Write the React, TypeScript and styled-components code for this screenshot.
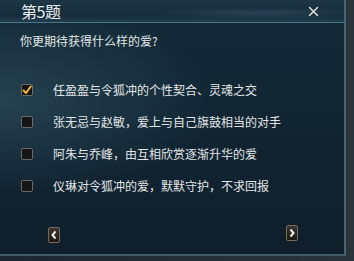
import React from "react"
import styled, { createGlobalStyle } from "styled-components"

const options = [
    { id: 1, text: "任盈盈与令狐冲的个性契合、灵魂之交", checked: true },
    { id: 2, text: "张无忌与赵敏，爱上与自己旗鼓相当的对手", checked: false },
    { id: 3, text: "阿朱与乔峰，由互相欣赏逐渐升华的爱", checked: false },
    { id: 4, text: "仪琳对令狐冲的爱，默默守护，不求回报", checked: false }
]

const GlobalStyle = createGlobalStyle`
    html, body {
        margin: 0;
        padding: 0;
        background: #141a20;
    }
    body {
        font-family: "Noto Sans CJK SC", "Liberation Sans", sans-serif;
    }
`

const Frame = styled.div`
    width: 354px;
    height: 261px;
    display: flex;
    background: linear-gradient(90deg, #1d2630 0%, #2a323a 100%);
`

const Panel = styled.div`
    width: 346px;
    height: 256px;
    display: flex;
    flex-direction: column;
    box-sizing: border-box;
    border-right: 2px solid #4a6370;
    border-bottom: 2px solid #3e5866;
    background:
        radial-gradient(ellipse at 0% 40%, rgba(60, 100, 115, 0.45) 0%, rgba(60, 100, 115, 0) 45%),
        linear-gradient(180deg, #142b38 0%, #112331 60%, #0f1f2c 100%);
`

const Header = styled.div`
    height: 23px;
    display: flex;
    align-items: center;
    justify-content: space-between;
    padding: 0 25px 0 21px;
    box-sizing: border-box;
    border-bottom: 1px solid #4d7486;
    background:
        radial-gradient(ellipse at 75% 60%, rgba(70, 110, 130, 0.35) 0%, rgba(70, 110, 130, 0) 30%),
        linear-gradient(180deg, #1d3746 0%, #162c3a 70%, #213e4e 100%);
`

const Title = styled.div`
    font-size: 16px;
    line-height: 22px;
    color: #e8ecee;
    letter-spacing: -0.4px;
`

const CloseButton = styled.div`
    width: 11px;
    height: 11px;
    display: flex;
    align-items: center;
    justify-content: center;
    margin-top: 1px;
`

const Body = styled.div`
    flex: 1;
    display: flex;
    flex-direction: column;
    padding: 10px 20px 0 21px;
`

const Question = styled.div`
    font-size: 12px;
    line-height: 16px;
    color: #e2e6e8;
    margin-left: -1px;
`

const OptionList = styled.div`
    display: flex;
    flex-direction: column;
    margin-top: 33px;
    gap: 16px;
`

const Option = styled.div`
    display: flex;
    align-items: center;
    height: 16px;
    gap: 20px;
`

const Box = styled.div`
    width: 10px;
    height: 10px;
    border: 1px solid #6b6a66;
    border-radius: 2px;
    background: #151515;
    display: flex;
    align-items: center;
    justify-content: center;
    flex-shrink: 0;
`

const OptionText = styled.div`
    font-size: 12px;
    line-height: 16px;
    color: #e2e6e8;
`

const Nav = styled.div`
    display: flex;
    justify-content: space-between;
    padding: 0 26px 0 27px;
    margin-top: 31px;
`

const ArrowButton = styled.div<{ $offset: number }>`
    width: 10px;
    height: 14px;
    margin-top: ${p => p.$offset}px;
    border: 1px solid #7a6a52;
    border-radius: 2px;
    background: linear-gradient(180deg, #3a3631 0%, #1b1815 100%);
    display: flex;
    align-items: center;
    justify-content: center;
`

export default function App() {
    return (
        <Frame>
            <GlobalStyle />
            <Panel>
                <Header>
                    <Title>第5题</Title>
                    <CloseButton>
                        <svg width="11" height="11" viewBox="0 0 11 11">
                            <path d="M1.5 1.5 L9.5 9.5 M9.5 1.5 L1.5 9.5" stroke="#e6e0d2" strokeWidth="1.5" strokeLinecap="round" />
                        </svg>
                    </CloseButton>
                </Header>
                <Body>
                    <Question>你更期待获得什么样的爱?</Question>
                    <OptionList>
                        {options.map(o => (
                            <Option key={o.id}>
                                <Box>
                                    {o.checked && (
                                        <svg width="10" height="10" viewBox="0 0 10 10">
                                            <path d="M1.5 5.5 L4 8 L8.8 1.5" stroke="#f2b640" strokeWidth="2" fill="none" strokeLinecap="round" strokeLinejoin="round" />
                                        </svg>
                                    )}
                                </Box>
                                <OptionText>{o.text}</OptionText>
                            </Option>
                        ))}
                    </OptionList>
                    <Nav>
                        <ArrowButton $offset={2}>
                            <svg width="8" height="10" viewBox="0 0 8 10">
                                <path d="M5.5 1.5 L2.5 5 L5.5 8.5" stroke="#f0ede6" strokeWidth="2" fill="none" />
                            </svg>
                        </ArrowButton>
                        <ArrowButton $offset={0}>
                            <svg width="8" height="10" viewBox="0 0 8 10">
                                <path d="M2.5 1.5 L5.5 5 L2.5 8.5" stroke="#f0ede6" strokeWidth="2" fill="none" />
                            </svg>
                        </ArrowButton>
                    </Nav>
                </Body>
            </Panel>
        </Frame>
    )
}
